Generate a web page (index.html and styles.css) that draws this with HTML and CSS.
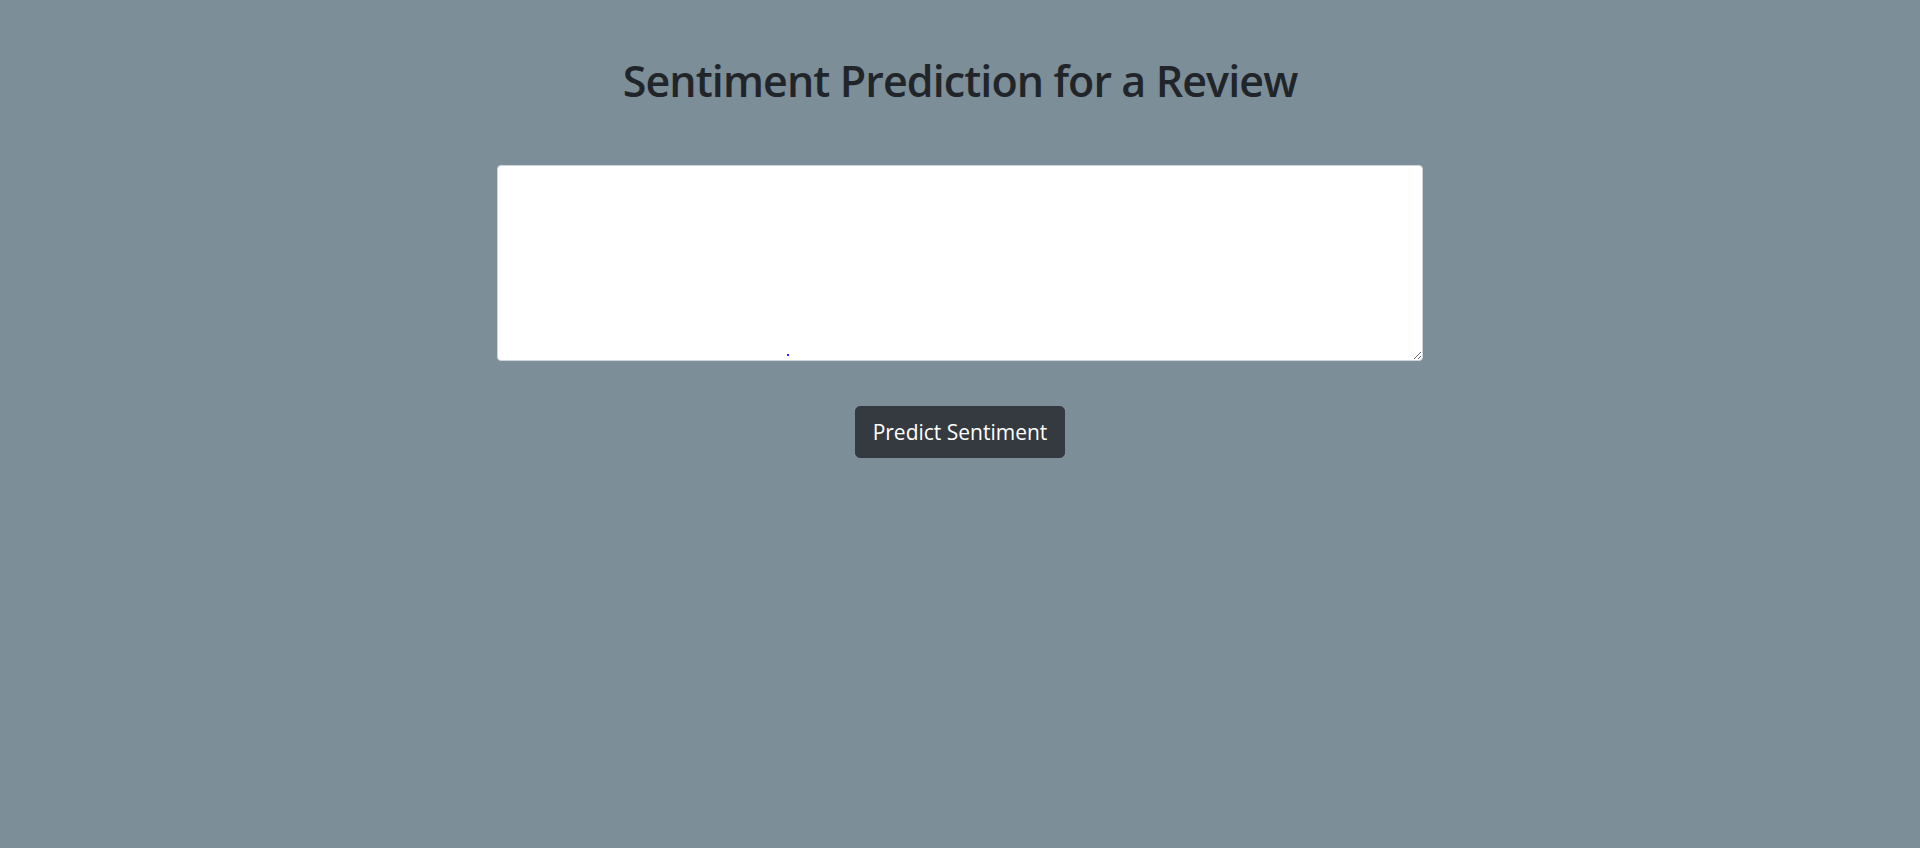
FILE: index.html
```html
<!DOCTYPE html>
<html lang="en">
<head>
<meta charset="utf-8">
<title>Sentiment Prediction</title>
<link rel="stylesheet" href="styles.css">
</head>
<body>
<main class="page">
  <h1 class="title">Sentiment Prediction for a Review</h1>
  <form class="form">
    <div class="field">
      <textarea class="review" name="review"></textarea>
      <span class="caret-dot"></span>
    </div>
    <button type="button" class="btn">Predict Sentiment</button>
  </form>
</main>
</body>
</html>
```
FILE: styles.css
```css
html, body {
  margin: 0;
  padding: 0;
  height: 100%;
}
body {
  background: #7c8e98;
  font-family: "Open Sans", "Noto Sans", "Liberation Sans", sans-serif;
  color: #212529;
}
.page {
  display: flex;
  flex-direction: column;
  align-items: center;
  padding-top: 56px;
}
.title {
  margin: 0;
  font-size: 43px;
  line-height: 50px;
  font-weight: 600;
  letter-spacing: -0.9px;
  color: #212529;
}
.form {
  display: flex;
  flex-direction: column;
  align-items: center;
  margin-top: 59px;
  gap: 45px;
}
.field {
  position: relative;
  width: 926px;
  height: 196px;
}
.review {
  box-sizing: border-box;
  width: 926px;
  height: 196px;
  border: 1px solid #ced4da;
  border-radius: 4px;
  background: #fff;
  display: block;
  resize: both;
  font-family: inherit;
  font-size: 16px;
  padding: 6px 12px;
}
.caret-dot {
  position: absolute;
  left: 290px;
  top: 189px;
  width: 2px;
  height: 2px;
  background: #2a2aff;
}
.btn {
  box-sizing: border-box;
  width: 210px;
  height: 52px;
  background: #343a40;
  color: #fff;
  border: 1px solid #343a40;
  border-radius: 5px;
  font-family: inherit;
  font-size: 21px;
  padding: 0 12px;
  cursor: pointer;
}
```
